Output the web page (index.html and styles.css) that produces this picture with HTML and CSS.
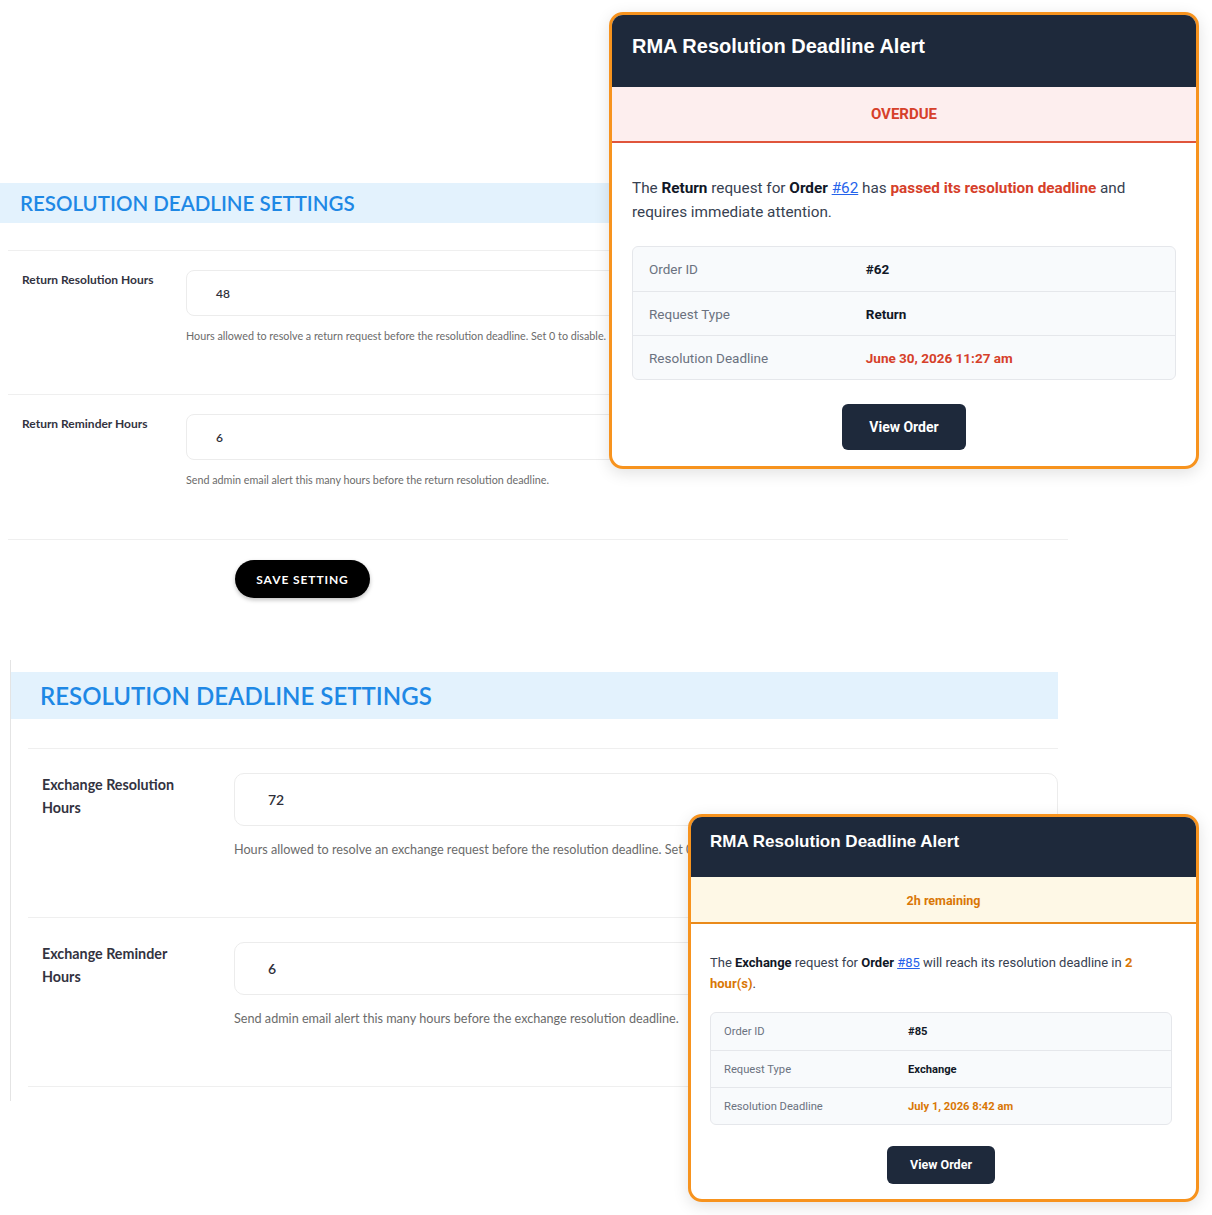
FILE: index.html
```html
<!DOCTYPE html>
<html lang="en">
<head>
<meta charset="utf-8">
<title>RMA Resolution Deadline Settings</title>
<link rel="stylesheet" href="styles.css">
</head>
<body>
<main class="page">
  <section class="settings settings--a">
    <h2 class="settings__title">RESOLUTION DEADLINE SETTINGS</h2>
    <div class="settings__rows">
      <div class="settings__row">
        <label class="settings__label">Return Resolution Hours</label>
        <div class="settings__field">
          <div class="settings__input">48</div>
          <p class="settings__help">Hours allowed to resolve a return request before the resolution deadline. Set 0 to disable.</p>
        </div>
      </div>
      <div class="settings__row">
        <label class="settings__label">Return Reminder Hours</label>
        <div class="settings__field">
          <div class="settings__input">6</div>
          <p class="settings__help">Send admin email alert this many hours before the return resolution deadline.</p>
        </div>
      </div>
    </div>
    <div class="settings__actions">
      <button class="save-btn" type="button">SAVE SETTING</button>
    </div>
  </section>

  <section class="settings settings--b">
    <h2 class="settings__title">RESOLUTION DEADLINE SETTINGS</h2>
    <div class="settings__rows">
      <div class="settings__row">
        <label class="settings__label">Exchange Resolution<br>Hours</label>
        <div class="settings__field">
          <div class="settings__input">72</div>
          <p class="settings__help">Hours allowed to resolve an exchange request before the resolution deadline. Set 0 to disable.</p>
        </div>
      </div>
      <div class="settings__row">
        <label class="settings__label">Exchange Reminder<br>Hours</label>
        <div class="settings__field">
          <div class="settings__input">6</div>
          <p class="settings__help">Send admin email alert this many hours before the exchange resolution deadline.</p>
        </div>
      </div>
    </div>
  </section>
</main>

<article class="alert alert--overdue">
  <header class="alert__head"><h3 class="alert__title">RMA Resolution Deadline Alert</h3></header>
  <div class="alert__status">OVERDUE</div>
  <div class="alert__body">
    <p class="alert__text">The <strong>Return</strong> request for <strong>Order</strong> <a href="#" class="alert__link">#62</a> has <strong class="alert__hl">passed its resolution deadline</strong> and requires immediate attention.</p>
    <table class="alert__table">
      <tr><td class="alert__k">Order ID</td><td class="alert__v">#62</td></tr>
      <tr><td class="alert__k">Request Type</td><td class="alert__v">Return</td></tr>
      <tr><td class="alert__k">Resolution Deadline</td><td class="alert__v alert__hl">June 30, 2026 11:27 am</td></tr>
    </table>
    <div class="alert__actions"><a href="#" class="alert__btn">View Order</a></div>
  </div>
</article>

<article class="alert alert--soon">
  <header class="alert__head"><h3 class="alert__title">RMA Resolution Deadline Alert</h3></header>
  <div class="alert__status">2h remaining</div>
  <div class="alert__body">
    <p class="alert__text">The <strong>Exchange</strong> request for <strong>Order</strong> <a href="#" class="alert__link">#85</a> will reach its resolution deadline in <strong class="alert__hl">2 hour(s)</strong>.</p>
    <table class="alert__table">
      <tr><td class="alert__k">Order ID</td><td class="alert__v">#85</td></tr>
      <tr><td class="alert__k">Request Type</td><td class="alert__v">Exchange</td></tr>
      <tr><td class="alert__k">Resolution Deadline</td><td class="alert__v alert__hl">July 1, 2026 8:42 am</td></tr>
    </table>
    <div class="alert__actions"><a href="#" class="alert__btn">View Order</a></div>
  </div>
</article>
</body>
</html>
```

FILE: styles.css
```css
* { box-sizing: border-box; }

html, body {
  margin: 0;
  background: #ffffff;
}

body {
  position: relative;
  width: 1212px;
  height: 1215px;
  overflow: hidden;
  font-family: "Lato", "Open Sans", sans-serif;
  color: #2f2f3a;
}

.page {
  padding-top: 183px;
}

/* ---------- settings panels ---------- */
.settings__title {
  margin: 0;
  background: #e3f2fd;
  color: #1e88e5;
  font-weight: 600;
  white-space: nowrap;
}

.settings__row {
  display: grid;
  border-top: 1px solid #efefef;
}

.settings__label {
  font-weight: 700;
  color: #33333f;
}

.settings__input {
  display: flex;
  align-items: center;
  border: 1px solid #ececec;
  background: #fff;
  color: #2f2f3a;
  font-weight: 600;
}

.settings__help {
  margin: 0;
  color: #6b6b6b;
  white-space: nowrap;
}

/* panel A (smaller capture) */
.settings--a {
  width: 1068px;
}

.settings--a .settings__title {
  height: 40px;
  line-height: 40px;
  padding-left: 20px;
  font-size: 20.5px;
}

.settings--a .settings__rows {
  margin: 27px 0 0 8px;
}

.settings--a .settings__row {
  grid-template-columns: 164px 1fr;
  padding: 19px 0 52px 14px;
}

.settings--a .settings__row + .settings__row {
  padding-bottom: 53px;
}

.settings--a .settings__label {
  font-size: 12px;
  line-height: 14px;
  margin-top: 3px;
}

.settings--a .settings__input {
  height: 46px;
  border-radius: 8px;
  padding-left: 29px;
  font-size: 12px;
}

.settings--a .settings__help {
  margin-top: 14px;
  font-size: 10.75px;
  line-height: 12px;
}

.settings__actions {
  margin-left: 8px;
  border-top: 1px solid #efefef;
  padding: 20px 0 0 227px;
}

.save-btn {
  display: block;
  width: 135px;
  height: 38px;
  border: 0;
  border-radius: 19px;
  background: #000;
  color: #fff;
  font-family: "Lato", sans-serif;
  font-weight: 700;
  font-size: 12px;
  letter-spacing: 0.9px;
  box-shadow: 0 2px 4px rgba(0, 0, 0, 0.25);
}

/* panel B (larger capture) */
.settings--b {
  width: 1048px;
  margin: 62px 0 0 10px;
  padding: 12px 0 14px;
  border-left: 1px solid #e4e4e4;
}

.settings--b .settings__title {
  height: 47px;
  line-height: 47px;
  padding-left: 29px;
  font-size: 24px;
}

.settings--b .settings__rows {
  margin: 29px 0 0 17px;
  border-bottom: 1px solid #efefef;
}

.settings--b .settings__row {
  grid-template-columns: 192px 1fr;
  padding: 24px 0 59px 14px;
}

.settings--b .settings__label {
  font-size: 14.3px;
  line-height: 23px;
}

.settings--b .settings__input {
  height: 53px;
  border-radius: 10px;
  padding-left: 33px;
  font-size: 14px;
}

.settings--b .settings__help {
  margin-top: 16px;
  font-size: 12.65px;
  line-height: 16px;
}

/* ---------- alert cards ---------- */
.alert {
  position: absolute;
  border: 3px solid #f7931e;
  border-radius: 14px;
  background: #fff;
  overflow: hidden;
  font-family: "Roboto", "Liberation Sans", sans-serif;
  color: #374151;
  box-shadow: 0 4px 16px rgba(0, 0, 0, 0.12);
}

.alert__head {
  background: #1e293b;
}

.alert__title {
  margin: 0;
  font-family: "Liberation Sans", Arial, sans-serif;
  font-weight: 700;
  color: #ffffff;
}

.alert__status {
  text-align: center;
  font-weight: 700;
}

.alert__text {
  margin: 0;
}

.alert__text strong {
  color: #111827;
  font-weight: 700;
}

.alert__link {
  color: #2563eb;
  text-decoration: underline;
}

.alert__table {
  width: 100%;
  border-collapse: separate;
  border-spacing: 0;
  background: #f8fafc;
  border: 1px solid #e5e7eb;
  border-radius: 6px;
}

.alert__table tr + tr td {
  border-top: 1px solid #e5e7eb;
}

.alert__k {
  width: 40%;
  color: #6b7280;
}

.alert__v {
  color: #111827;
  font-weight: 700;
}

.alert__actions {
  text-align: center;
}

.alert__btn {
  display: inline-block;
  background: #1e293b;
  color: #ffffff;
  font-weight: 700;
  text-decoration: none;
  border-radius: 6px;
}

/* overdue variant (top) */
.alert--overdue {
  left: 609px;
  top: 12px;
  width: 590px;
}

.alert--overdue .alert__head {
  padding: 19px 20px 29px;
}

.alert--overdue .alert__title {
  font-size: 20px;
  line-height: 24px;
}

.alert--overdue .alert__status {
  padding: 17px 0;
  line-height: 20px;
  font-size: 15px;
  background: #fdeeee;
  color: #d6402a;
  border-bottom: 2px solid #e0553b;
}

.alert--overdue .alert__body {
  padding: 33px 20px 16px;
}

.alert--overdue .alert__text {
  font-size: 15.3px;
  line-height: 24px;
}

.alert--overdue .alert__text .alert__hl,
.alert--overdue .alert__v.alert__hl {
  color: #d6402a;
}

.alert--overdue .alert__table {
  margin-top: 22px;
}

.alert--overdue .alert__table td {
  height: 44px;
  padding: 0 16px;
  font-size: 13.5px;
}

.alert--overdue .alert__actions {
  margin-top: 24px;
}

.alert--overdue .alert__btn {
  padding: 0 27px;
  height: 46px;
  line-height: 46px;
  font-size: 14px;
}

/* soon variant (bottom) */
.alert--soon {
  left: 688px;
  top: 814px;
  width: 511px;
}

.alert--soon .alert__head {
  padding: 15px 19px 25px;
}

.alert--soon .alert__title {
  font-size: 17px;
  line-height: 20px;
}

.alert--soon .alert__status {
  padding: 16px 0 13px;
  line-height: 16px;
  font-size: 12.5px;
  background: #fef8e6;
  color: #d97706;
  border-bottom: 2px solid #ea8a1a;
}

.alert--soon .alert__body {
  padding: 28px 24px 15px 19px;
}

.alert--soon .alert__text {
  font-size: 13px;
  line-height: 21px;
}

.alert--soon .alert__text .alert__hl,
.alert--soon .alert__v.alert__hl {
  color: #d97706;
}

.alert--soon .alert__table {
  margin-top: 18px;
}

.alert--soon .alert__table td {
  height: 37px;
  padding: 0 13px;
  font-size: 11.2px;
}

.alert--soon .alert__actions {
  margin-top: 21px;
}

.alert--soon .alert__btn {
  padding: 0 23px;
  height: 38px;
  line-height: 38px;
  font-size: 12.5px;
}
```
